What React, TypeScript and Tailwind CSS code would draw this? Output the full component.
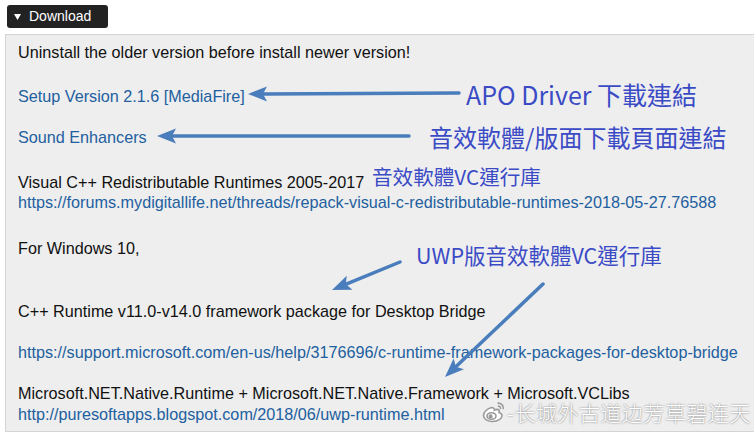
import { ReactNode } from 'react';

const Line = ({
  children,
  link,
  className,
}: {
  children: ReactNode;
  link?: boolean;
  className?: string;
}) => (
  <div
    className={`${className ?? ''} h-[20px] whitespace-nowrap ${link ? 'text-[#22609f]' : 'text-[#111]'}`}>
    {children}
  </div>
);

const Note = ({ children, className }: { children: ReactNode; className: string }) => (
  <div
    className={`absolute whitespace-nowrap font-['Noto_Sans_CJK_TC','Noto_Sans',sans-serif] leading-none text-[#3b4bc6] ${className}`}>
    {children}
  </div>
);

const Arrow = ({ x1, y1, x2, y2 }: { x1: number; y1: number; x2: number; y2: number }) => {
  const dx = x2 - x1;
  const dy = y2 - y1;
  const len = Math.hypot(dx, dy);
  const ux = dx / len;
  const uy = dy / len;
  const head = 19;
  const half = 7.5;
  const bx = x2 - ux * head;
  const by = y2 - uy * head;
  const px = -uy;
  const py = ux;
  return (
    <g>
      <line
        x1={x1}
        y1={y1}
        x2={bx + ux * 3}
        y2={by + uy * 3}
        stroke="#4a7dbb"
        strokeWidth={3.5}
        strokeLinecap="round"
      />
      <polygon
        points={`${x2},${y2} ${bx + px * half},${by + py * half} ${bx + ux * 4},${by + uy * 4} ${bx - px * half},${by - py * half}`}
        fill="#4a7dbb"
      />
    </g>
  );
};

const WeiboLogo = () => (
  <svg width="24" height="22" viewBox="0 0 24 22">
    <g fill="none" stroke="#9a9a9a" strokeWidth="1.6">
      <path d="M9.5 6.5c-4 .8-8 4.5-8 8 0 3.5 4.2 6 9 6 5.6 0 9.5-3 9.5-5.8 0-2-1.8-2.8-3-3.2.6-1.6.4-3-1.6-3.1-1.4 0-3 .7-3 .7s.6-2.4-2.9-2.6z" fill="#fff" />
      <ellipse cx="9.5" cy="15" rx="4.5" ry="3.3" />
      <circle cx="8.6" cy="15.4" r="1.3" fill="#9a9a9a" />
      <path d="M15.5 2.2c3.4-.6 6.6 2.4 5.8 6" />
      <path d="M15.8 5.2c1.6-.3 3 1 2.7 2.7" />
    </g>
  </svg>
);

export default function App() {
  return (
    <div className="relative h-[433px] w-[754px] overflow-hidden bg-white font-['Liberation_Sans',Arial,sans-serif]">
      <div className="pl-[7px] pt-[5px]">
        <div className="flex h-[23px] w-[101px] items-center rounded-[3px] bg-[#222] pl-[7px] text-[14px] text-white">
          <svg width="7" height="6" viewBox="0 0 7 6">
            <polygon points="0,0 7,0 3.5,6" fill="#fff" />
          </svg>
          <span className="ml-[8px]">Download</span>
        </div>
      </div>

      <div className="ml-[5px] mt-[6px] h-[398px] border border-r-0 border-[#d4d4d4] bg-[#eeeeee] pl-[12px] pt-[7px] text-[16.2px] leading-[20px]">
        <Line>Uninstall the older version before install newer version!</Line>
        <Line link className="mt-[24px]">
          Setup Version 2.1.6 [MediaFire]
        </Line>
        <Line link className="mt-[21px]">
          Sound Enhancers
        </Line>
        <Line className="mt-[25px]">Visual C++ Redistributable Runtimes 2005-2017</Line>
        <Line link>
          https://forums.mydigitallife.net/threads/repack-visual-c-redistributable-runtimes-2018-05-27.76588
        </Line>
        <Line className="mt-[26px]">For Windows 10,</Line>
        <Line className="mt-[43px]">C++ Runtime v11.0-v14.0 framework package for Desktop Bridge</Line>
        <Line link className="mt-[21px]">
          https://support.microsoft.com/en-us/help/3176696/c-runtime-framework-packages-for-desktop-bridge
        </Line>
        <Line className="mt-[21px]">
          Microsoft.NET.Native.Runtime + Microsoft.NET.Native.Framework + Microsoft.VCLibs
        </Line>
        <Line link className="mt-[1px]">
          http://puresoftapps.blogspot.com/2018/06/uwp-runtime.html
        </Line>
      </div>

      {/* annotations drawn over the screenshot */}
      <svg className="pointer-events-none absolute inset-0" width="754" height="433">
        <Arrow x1={459} y1={93} x2={248} y2={94} />
        <Arrow x1={409} y1={136} x2={157} y2={136} />
        <Arrow x1={400} y1={262} x2={332} y2={290} />
        <Arrow x1={543} y1={284} x2={445} y2={377} />
      </svg>
      <Note className="left-[466px] top-[82px] text-[25px]">APO Driver 下載連結</Note>
      <Note className="left-[429px] top-[125px] text-[24px]">音效軟體/版面下載頁面連結</Note>
      <Note className="left-[372px] top-[166px] text-[20.6px]">音效軟體VC運行庫</Note>
      <Note className="left-[416px] top-[244px] text-[21.5px]">UWP版音效軟體VC運行庫</Note>

      <div className="absolute left-[482px] top-[401px] flex items-center gap-[1px]">
        <WeiboLogo />
        <span className="font-['Noto_Sans_CJK_SC',sans-serif] text-[21px] font-light leading-none tracking-[0.5px] text-white [text-shadow:0_0_2px_rgba(0,0,0,0.6)]">
          -长城外古道边芳草碧连天
        </span>
      </div>
    </div>
  );
}
